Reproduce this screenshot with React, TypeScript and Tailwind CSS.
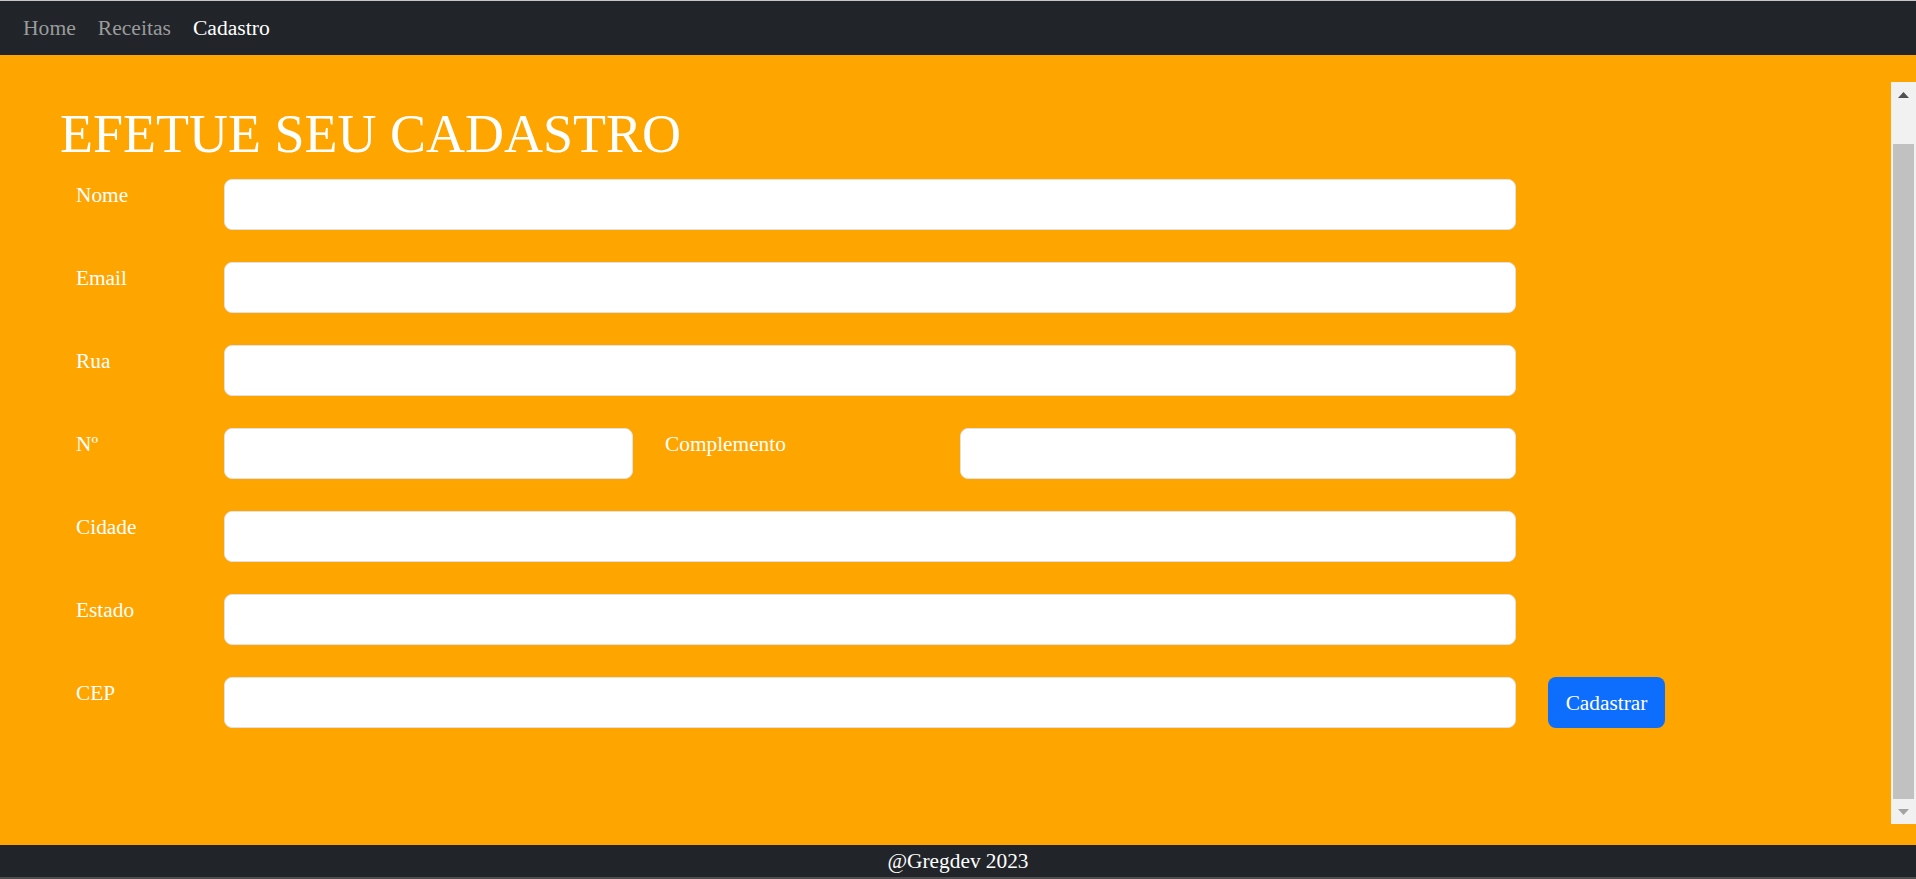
import React from "react";

const inputCls =
  "h-[51px] bg-white border border-[#dee2e6] rounded-[8px] px-[16px] text-[21.33px] text-[#212529] outline-none";

function Field({ label }: { label: string }) {
  return (
    <div className="flex items-start mb-[32px]">
      <label className="w-[148px] text-[21.33px] leading-[32px] text-white">{label}</label>
      <input type="text" className={`${inputCls} w-[1292px]`} />
    </div>
  );
}

export default function App() {
  return (
    <div className="h-[879px] flex flex-col font-['Liberation_Serif',serif] overflow-hidden">
      {/* navbar */}
      <nav className="h-[55px] shrink-0 bg-[#212529] border-t border-[#c6c6c6] flex items-center pl-[23px] gap-[22px] text-[21.6px] leading-[32px]">
        <a className="text-[#9a9b9d]">Home</a>
        <a className="text-[#9a9b9d]">Receitas</a>
        <a className="text-white">Cadastro</a>
      </nav>

      <main className="h-[790px] shrink-0 bg-[#ffa500] flex">
        <div className="flex-1 pl-[60px] pt-[47px]">
          <h1 className="text-[54px] leading-[64px] text-white mb-[13px]">EFETUE SEU CADASTRO</h1>
          <form className="pl-[16px]">
            <Field label="Nome" />
            <Field label="Email" />
            <Field label="Rua" />
            <div className="flex items-start mb-[32px]">
              <label className="w-[148px] text-[21.33px] leading-[32px] text-white">Nº</label>
              <input type="text" className={`${inputCls} w-[409px]`} />
              <label className="ml-[32px] w-[295px] text-[21.33px] leading-[32px] text-white">Complemento</label>
              <input type="text" className={`${inputCls} w-[556px]`} />
            </div>
            <Field label="Cidade" />
            <Field label="Estado" />
            <div className="flex items-start">
              <label className="w-[148px] text-[21.33px] leading-[32px] text-white">CEP</label>
              <input type="text" className={`${inputCls} w-[1292px]`} />
              <button
                type="button"
                className="ml-[32px] w-[117px] h-[51px] bg-[#0d6efd] rounded-[8px] text-white text-[21.33px] leading-[32px]"
              >
                Cadastrar
              </button>
            </div>
          </form>
        </div>

        {/* scrollbar */}
        <div className="w-[25px] h-[742px] mt-[27px] bg-[#f1f1f1] flex flex-col items-center">
          <div className="h-[25px] w-full flex items-center justify-center">
            <svg width="11" height="6" viewBox="0 0 11 6">
              <polygon points="5.5,0 11,6 0,6" fill="#505050" />
            </svg>
          </div>
          <div className="flex-1 w-full px-[2px] flex flex-col">
            <div className="h-[37px]" />
            <div className="flex-1 bg-[#c1c1c1]" />
          </div>
          <div className="h-[25px] w-full flex items-center justify-center">
            <svg width="11" height="6" viewBox="0 0 11 6">
              <polygon points="0,0 11,0 5.5,6" fill="#a3a3a3" />
            </svg>
          </div>
        </div>
      </main>

      <footer className="h-[32px] shrink-0 bg-[#212529] text-white text-center text-[21.33px] leading-[32px]">
        @Gregdev 2023
      </footer>
      <div className="h-[2px] shrink-0 bg-[#4d4d4d]" />
    </div>
  );
}
